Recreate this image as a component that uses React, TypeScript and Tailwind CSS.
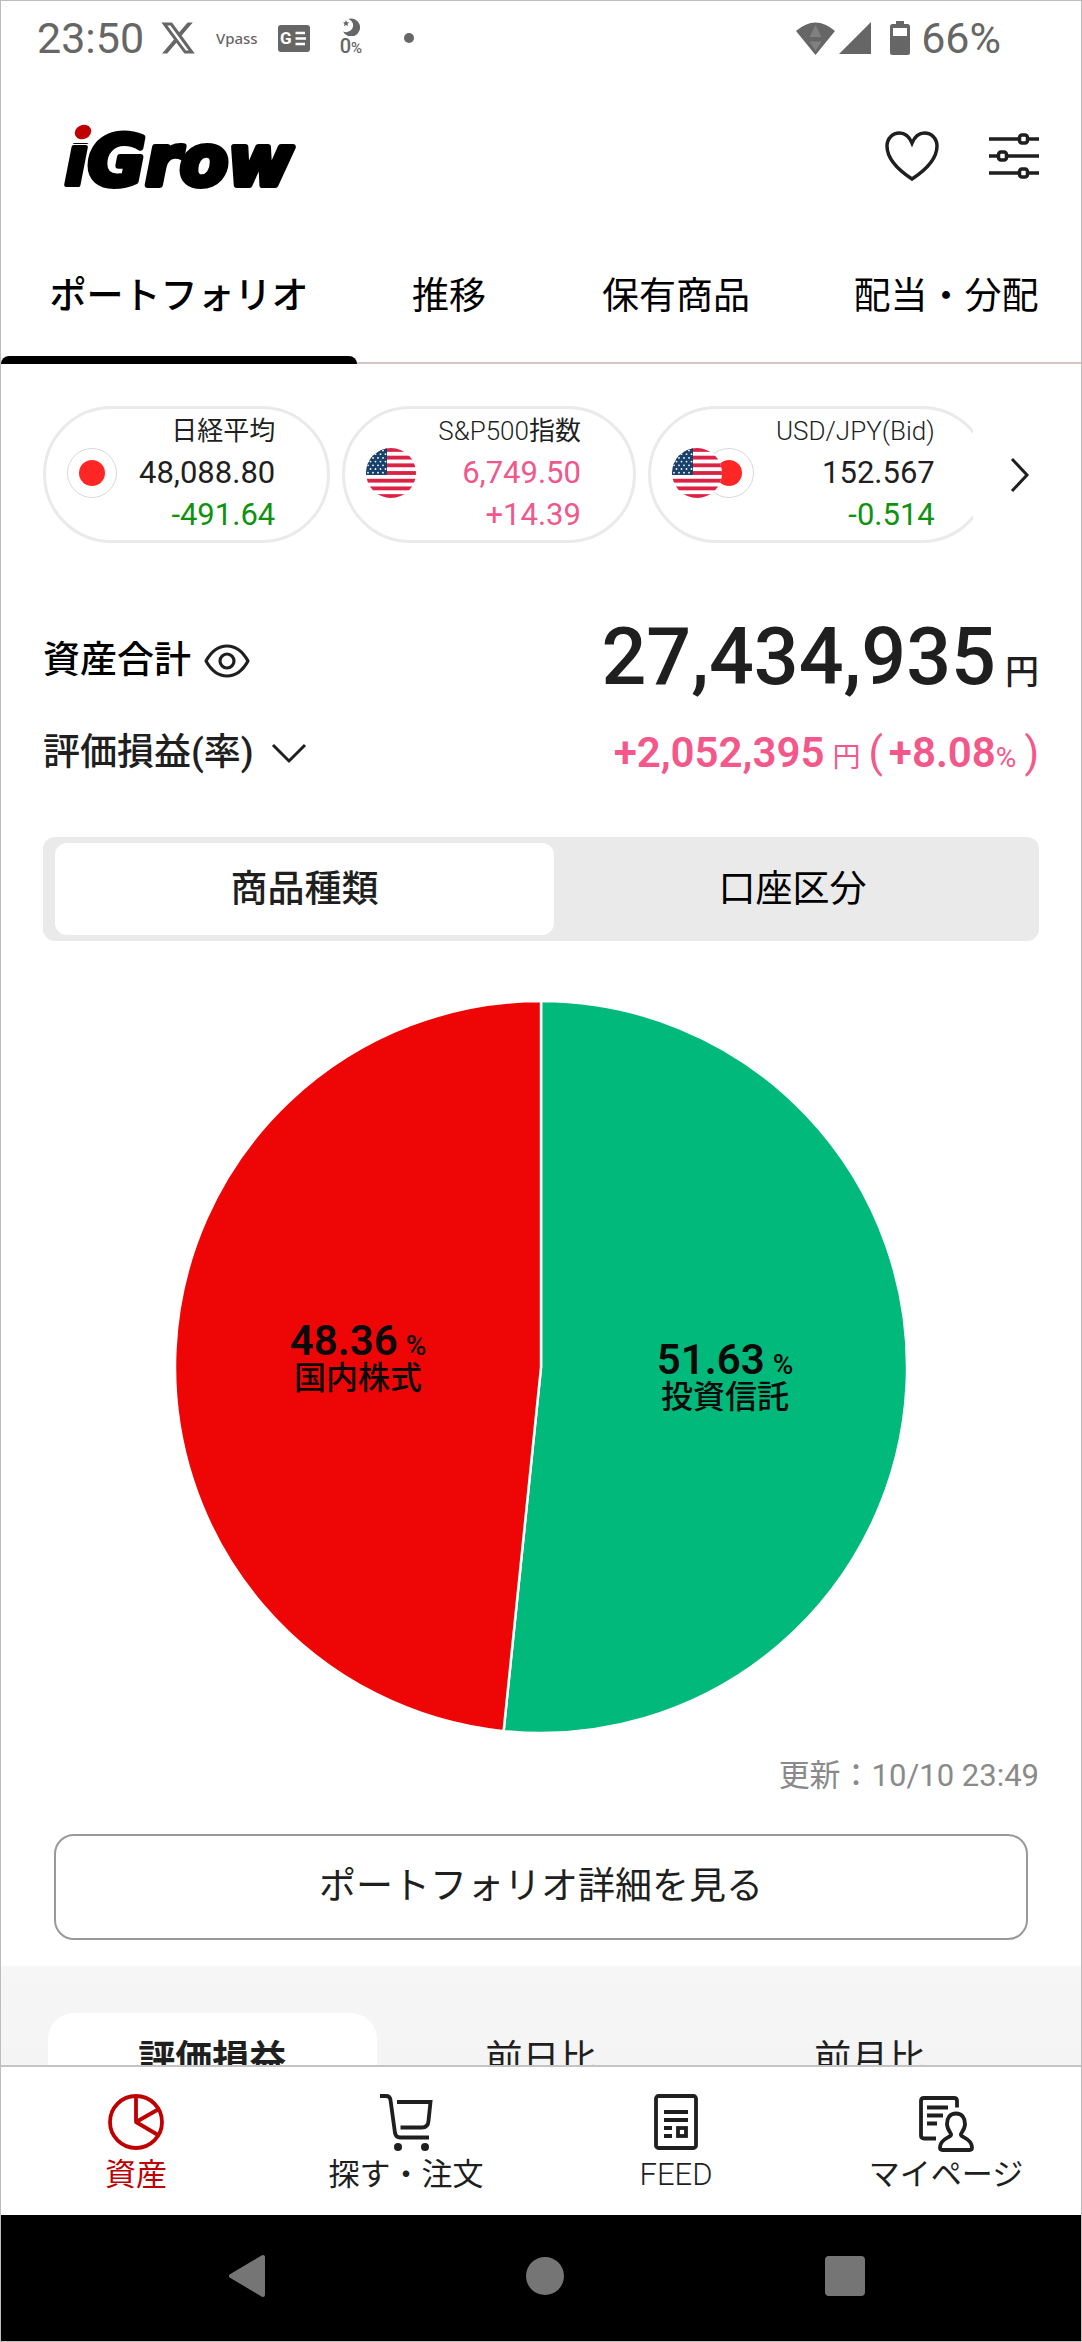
import { useState } from "react";
import type { ReactNode } from "react";

const tabs = ["ポートフォリオ", "推移", "保有商品", "配当・分配"];

const segments = ["商品種類", "口座区分"];

const periods = ["評価損益", "前日比", "前月比"];

const slices = [
  { name: "投資信託", pct: 51.63, color: "#02b97c", x: 550, y: 373 },
  { name: "国内株式", pct: 48.36, color: "#ee0606", x: 183, y: 354 },
];

type Ticker = { id: string; name: ReactNode; price: string; diff: string; flags: ReactNode; priceClass: string; diffClass: string };

function JapanFlag({ className = "" }: { className?: string }) {
  return (
    <svg viewBox="0 0 50 50" className={`size-[50px] shrink-0 ${className}`} aria-hidden="true">
      <circle cx="25" cy="25" r="24.5" fill="#fff" stroke="#d5d9d9" />
      <circle cx="25" cy="25" r="13" fill="#ff2626" />
    </svg>
  );
}

function UsFlag({ id, className = "" }: { id: string; className?: string }) {
  const stripes = [0, 1, 2, 3, 4, 5, 6];
  const starRows = [0, 1, 2, 3, 4, 5, 6];
  const h = 50 / 13;
  return (
    <svg viewBox="0 0 50 50" className={`size-[50px] shrink-0 ${className}`} aria-hidden="true">
      <defs>
        <clipPath id={id}>
          <circle cx="25" cy="25" r="25" />
        </clipPath>
      </defs>
      <g clipPath={`url(#${id})`}>
        <rect width="50" height="50" fill="#fff" />
        {stripes.map((i) => (
          <rect key={i} y={i * 2 * h} width="50" height={h} fill="#dc2245" />
        ))}
        <rect width="21" height={h * 7} fill="#17406d" />
        {starRows.map((r) =>
          [0, 1, 2, 3].map((c) => (
            <circle key={`${r}-${c}`} cx={c * 5 + (r % 2 ? 4.5 : 2)} cy={r * 3.7 + 2.5} r="0.9" fill="#fff" />
          ))
        )}
      </g>
    </svg>
  );
}

const tickers: Ticker[] = [
  {
    id: "nikkei",
    name: <span className="font-normal">日経平均</span>,
    price: "48,088.80",
    diff: "-491.64",
    flags: <JapanFlag />,
    priceClass: "text-[#1f1f1f]",
    diffClass: "text-[#0f930f]",
  },
  {
    id: "sp500",
    name: (
      <>
        S&amp;P500<span className="font-normal">指数</span>
      </>
    ),
    price: "6,749.50",
    diff: "+14.39",
    flags: <UsFlag id="flag-sp" />,
    priceClass: "text-[#f0588c]",
    diffClass: "text-[#f0588c]",
  },
  {
    id: "usdjpy",
    name: "USD/JPY(Bid)",
    price: "152.567",
    diff: "-0.514",
    flags: (
      <>
        <UsFlag id="flag-usd" className="z-10" />
        <JapanFlag className="-ml-[18px]" />
      </>
    ),
    priceClass: "text-[#1f1f1f]",
    diffClass: "text-[#0f930f]",
  },
];

function StatusBar() {
  return (
    <div className="flex h-[74px] shrink-0 items-center justify-between pr-[80px] pl-[36px] text-[#666]">
      <div className="flex items-center">
        <span className="text-[43px] leading-[50px]">23:50</span>
        <svg viewBox="1 2 22 20" preserveAspectRatio="none" className="ml-[17px] h-8 w-[34px]" fill="currentColor" aria-hidden="true">
          <path d="M18.244 2.25h3.308l-7.227 8.26 8.502 11.24H16.17l-5.214-6.817L4.99 21.75H1.68l7.73-8.835L1.254 2.25H8.08l4.713 6.231zm-1.161 17.52h1.833L7.084 4.126H5.117z" />
        </svg>
        <span className="ml-[21px] font-['Noto_Sans',sans-serif] text-[15px] leading-5 font-medium">Vpass</span>
        <svg viewBox="0 0 32 27" className="ml-[20px] h-[27px] w-8" aria-hidden="true">
          <rect width="32" height="27" rx="3" fill="#666" />
          <text x="2" y="19" fontSize="17" fontWeight="700" fill="#fff">
            G
          </text>
          <path d="M17.5 8H27M17.5 13.5H28M17.5 19H27" stroke="#fff" strokeWidth="2.4" />
        </svg>
        <div className="ml-[30px] flex flex-col items-center">
          <svg viewBox="0 0 18 18" className="size-[18px]" fill="currentColor" aria-hidden="true">
            <path d="M6 1A9 9 0 1 1 1 13.5A7.5 7.5 0 0 0 10 11A6.5 6.5 0 0 0 6 1Z" />
            <path d="M4 2L5 4.2L7.2 4.5L5.5 6L6 8.200L4 7L2 8.2L2.5 6L1 4.5L3.2 4.2Z" />
          </svg>
          <span className="text-[20px] leading-5 font-medium">
            0<span className="text-[15px]">%</span>
          </span>
        </div>
        <span className="ml-[42px] size-[10px] rounded-full bg-[#666]" />
      </div>
      <div className="flex items-center">
        <svg viewBox="0 0 39 33" className="h-[33px] w-[39px]" aria-hidden="true">
          <path d="M0 9Q19.5 -8 39 9L19.5 33Z" fill="#666" />
          <path d="M19.5 3L25.5 15H13.5ZM13.5 19.5H25.5L19.5 29Z" fill="#808080" />
        </svg>
        <svg viewBox="0 0 32 32" className="ml-1 size-8" fill="currentColor" aria-hidden="true">
          <path d="M32 0V32H0Z" />
        </svg>
        <svg viewBox="0 0 20 34" className="ml-[19px] h-[34px] w-5" aria-hidden="true">
          <path d="M6 0H14V3H17.5Q20 3 20 5.5V31.5Q20 34 17.5 34H2.5Q0 34 0 31.5V5.5Q0 3 2.5 3H6Z" fill="#666" />
          <rect x="3" y="7" width="14" height="8" fill="#fff" />
        </svg>
        <span className="ml-[11px] text-[43px] leading-[50px]">66%</span>
      </div>
    </div>
  );
}

function Logo() {
  return (
    <svg viewBox="0 0 260 92" className="h-[92px] w-[260px]" role="img" aria-label="iGrow">
      <defs>
        {/* hides the font's own dot so the red one can take its place */}
        <linearGradient id="logo-stem" gradientUnits="userSpaceOnUse" x1="0" y1="0" x2="0" y2="100">
          <stop offset="33%" stopColor="#000" stopOpacity="0" />
          <stop offset="33%" stopColor="#000" />
        </linearGradient>
      </defs>
      <text
        x="3"
        y="75"
        fontSize="70"
        fontWeight="700"
        fontStyle="italic"
        stroke="#000"
        strokeWidth="6"
        strokeLinejoin="round"
        className="font-['DejaVu_Sans',sans-serif]"
      >
        <tspan fill="url(#logo-stem)" stroke="url(#logo-stem)" strokeWidth="4">
          i
        </tspan>
        Grow
      </text>
      <ellipse cx="22" cy="22" rx="8.5" ry="7" fill="#bf0000" transform="rotate(-25 22 22)" />
    </svg>
  );
}

function Header() {
  return (
    <header className="flex h-[162px] shrink-0 items-center justify-between pr-[42px] pl-[60px]">
      <a href="#top">
        <Logo />
      </a>
      <div className="flex items-center gap-[50px]">
        <button type="button" aria-label="お気に入り">
          <svg viewBox="0 0 54 50" className="h-[50px] w-[54px]" fill="none" stroke="#1f1f1f" strokeWidth="3.5" aria-hidden="true">
            <path d="M27 12C24 5 19.5 2 14.5 2C7.5 2 2 7.5 2 15C2 26 11 37.5 27 48C43 37.5 52 26 52 15C52 7.5 46.5 2 39.5 2C34.5 2 30 5 27 12Z" />
          </svg>
        </button>
        <button type="button" aria-label="設定">
          <svg viewBox="0 0 50 48" className="h-12 w-[50px]" fill="none" stroke="#1f1f1f" strokeWidth="3.5" aria-hidden="true">
            <path d="M0 7H30M39 7H50M0 24H9M18 24H50M0 41H30M39 41H50" />
            <rect x="30.5" y="3" width="8" height="8" rx="2.5" />
            <rect x="9.5" y="20" width="8" height="8" rx="2.5" />
            <rect x="30.5" y="37" width="8" height="8" rx="2.5" />
          </svg>
        </button>
      </div>
    </header>
  );
}

function TickerPill({ name, price, diff, flags, priceClass, diffClass }: Ticker) {
  return (
    <div className="flex shrink-0 items-center gap-[22px] rounded-full border-[3px] border-[#eaeaea] pt-px pr-[52px] pb-1 pl-[21px]">
      <div className="flex">{flags}</div>
      <div className="text-right text-[31px] leading-[42px]">
        <p className="text-[26px] leading-[42px] font-light text-[#1f1f1f]">{name}</p>
        <p className={priceClass}>{price}</p>
        <p className={diffClass}>{diff}</p>
      </div>
    </div>
  );
}

function AllocationPie() {
  const r = 366;
  let total = 0;

  const paths = slices.map((s, i) => {
    const start = (total / 100) * 2 * Math.PI;
    total = i === slices.length - 1 ? 100 : total + s.pct;
    const end = (total / 100) * 2 * Math.PI;
    const x1 = r + r * Math.sin(start);
    const y1 = r - r * Math.cos(start);
    const x2 = r + r * Math.sin(end);
    const y2 = r - r * Math.cos(end);
    return `M ${r} ${r} L ${x1} ${y1} A ${r} ${r} 0 ${end - start > Math.PI ? 1 : 0} 1 ${x2} ${y2} Z`;
  });

  return (
    <svg viewBox="0 0 732 732" className="mx-auto block w-[73.5%]" role="img" aria-label="商品種類の内訳">
      {paths.map((d, i) => (
        <path key={slices[i].name} d={d} fill={slices[i].color} stroke="#fff" strokeWidth="2.5" />
      ))}
      {slices.map((s) => (
        <g key={s.name} textAnchor="middle" fill="#0a0a0a">
          <text x={s.x} y={s.y} fontSize="42" fontWeight="600">
            {s.pct}
            <tspan dx="8" fontSize="28" fontWeight="500">
              %
            </tspan>
          </text>
          <text x={s.x} y={s.y + 34} fontSize="32" fontWeight="500">
            {s.name}
          </text>
        </g>
      ))}
    </svg>
  );
}

const navItems = [
  {
    label: "資産",
    icon: (
      <>
        <circle cx="28" cy="29" r="26" />
        <path d="M28 3V29L50 16.5M28 29L50 42" strokeLinejoin="round" />
      </>
    ),
  },
  {
    label: "探す・注文",
    icon: (
      <>
        <path d="M2 3H8Q12 3 12.5 7L17 40Q18 44.5 22 44.5H51M19 9H52.5L50.5 28Q50 34.5 44 34.5H22.5" />
        <circle cx="20" cy="54" r="4" fill="currentColor" stroke="none" />
        <circle cx="47" cy="54" r="4" fill="currentColor" stroke="none" />
      </>
    ),
  },
  {
    label: "FEED",
    icon: (
      <>
        <rect x="8" y="3" width="40" height="52" rx="2.5" />
        <path d="M16 19H40M16 27H40M16 35H24M16 43H24" />
        <rect x="30" y="35" width="8" height="8" />
      </>
    ),
  },
  {
    label: "マイページ",
    icon: (
      <>
        <path d="M18 45.5H6Q3 45.5 3 42.5V8Q3 5 6 5H36Q39 5 39 8V14.5" />
        <path d="M9 14.5H30M9 22.5H25M9 30.5H19" />
        <path d="M38 20.5C32 20.5 29 25 29 31C29 35 30.5 37 32.5 40C36 45 22 44 22 54.5Q22 57 24.5 57H51.5Q54 57 54 54.5C54 44 40 45 43.5 40C45.5 37 47 35 47 31C47 25 44 20.5 38 20.5Z" />
      </>
    ),
  },
];

export default function App() {
  const [tab, setTab] = useState(0);
  const [segment, setSegment] = useState(0);
  const [period, setPeriod] = useState(0);
  const [nav, setNav] = useState(0);

  return (
    <div className="flex h-screen flex-col overflow-hidden border border-[#bdbdbd] bg-white font-['Roboto','Noto_Sans_CJK_JP',sans-serif] text-[#1f1f1f]">
      <StatusBar />
      <Header />

      <div role="tablist" className="grid shrink-0 grid-cols-[356fr_184fr_270fr_270fr] border-b-2 border-[#d5c6c4] text-[37px] leading-[54px] text-black">
        {tabs.map((t, i) => (
          <button
            key={t}
            type="button"
            role="tab"
            aria-selected={tab === i}
            onClick={() => setTab(i)}
            className={`relative pt-[33px] pb-[38px] whitespace-nowrap ${tab === i ? "font-medium" : ""}`}
          >
            {t}
            {tab === i && <span className="absolute inset-x-0 -bottom-[2px] h-2 rounded-t-lg bg-black" />}
          </button>
        ))}
      </div>

      <main className="min-h-0 flex-1 overflow-y-auto [scrollbar-width:none]">
        <div className="flex items-center pt-[42px] pl-[42px]">
          <div className="flex min-w-0 flex-1 gap-3 overflow-hidden">
            {tickers.map((t) => (
              <TickerPill key={t.id} {...t} />
            ))}
          </div>
          <button type="button" aria-label="次へ" className="flex w-[108px] justify-center pr-[14px]">
            <svg viewBox="0 0 20 36" className="h-9 w-5" fill="none" stroke="#1f1f1f" strokeWidth="3" aria-hidden="true">
              <path d="M2 2L17 18L2 34" />
            </svg>
          </button>
        </div>

        <section className="px-[42px] pt-[74px]">
          <div className="flex items-center justify-between">
            <div className="flex items-center gap-[13px] pt-2">
              <h2 className="text-[37px] leading-[54px] font-medium text-black">資産合計</h2>
              <button type="button" aria-label="金額を隠す">
                <svg viewBox="0 0 46 34" className="h-[34px] w-[46px]" fill="none" stroke="#1f1f1f" strokeWidth="3.2" aria-hidden="true">
                  <path d="M2 17C7 8 14 2 23 2C32 2 39 8 44 17C39 26 32 32 23 32C14 32 7 26 2 17Z" strokeLinejoin="round" />
                  <circle cx="23" cy="17" r="7" />
                </svg>
              </button>
            </div>
            <p className="text-[79px] leading-[80px] font-medium">
              27,434,935<span className="ml-[9px] text-[34px] leading-none">円</span>
            </p>
          </div>
          <div className="mt-[29px] flex items-center justify-between">
            <button type="button" className="flex items-center gap-[17px] text-[37px] leading-[54px] font-medium">
              評価損益(率)
              <svg viewBox="0 0 36 22" className="h-[22px] w-9" fill="none" stroke="#1f1f1f" strokeWidth="3" aria-hidden="true">
                <path d="M2 3L18 19L34 3" />
              </svg>
            </button>
            <p className="flex items-baseline text-[42px] leading-[54px] font-semibold text-[#f4578a]">
              +2,052,395
              <span className="ml-[8px] text-[28px] leading-none font-normal">円</span>
              <span className="ml-[8px] font-normal">(</span>
              <span className="ml-[6px]">+8.08</span>
              <span className="text-[28px] leading-none font-normal">%</span>
              <span className="ml-[8px] font-normal">)</span>
            </p>
          </div>

          <div role="tablist" className="mt-[57px] grid grid-cols-[498fr_476fr] rounded-xl bg-[#eaeaea] py-[6px] pr-2 pl-3 text-[37px] leading-[54px]">
            {segments.map((s, i) => (
              <button
                key={s}
                type="button"
                role="tab"
                aria-selected={segment === i}
                onClick={() => setSegment(i)}
                className={`rounded-xl pt-5 pb-[18px] ${segment === i ? "bg-white font-medium" : "text-black"}`}
              >
                {s}
              </button>
            ))}
          </div>

          <div className="pt-[60px]">
            <AllocationPie />
          </div>
          <p className="mt-[20px] text-right text-[31px] leading-[46px] text-[#8a8a8a]">更新：10/10 23:49</p>
        </section>

        <div className="px-[53px] pt-[35px] pb-[26px]">
          <button type="button" className="w-full rounded-[20px] border-[2px] border-[#999] py-[24px] text-[37px] leading-[54px]">
            ポートフォリオ詳細を見る
          </button>
        </div>

        <section className="bg-gradient-to-b from-[#f6f6f6] to-[#f3f3f3] px-[47px] pt-[47px] pb-[60px]">
          <div role="tablist" className="grid grid-cols-3 text-[37px] leading-[54px]">
            {periods.map((p, i) => (
              <button
                key={p}
                type="button"
                role="tab"
                aria-selected={period === i}
                onClick={() => setPeriod(i)}
                className={`rounded-[26px] py-5 ${period === i ? "bg-white font-bold" : ""}`}
              >
                {p}
              </button>
            ))}
          </div>
        </section>
      </main>

      <nav className="grid shrink-0 grid-cols-4 border-t-2 border-[#c4c4c4] bg-white pt-[26px] pb-[18px]">
        {navItems.map((item, i) => (
          <a
            key={item.label}
            href="#top"
            onClick={() => setNav(i)}
            className={`flex flex-col items-center text-[31px] leading-[44px] ${
              nav === i ? "text-[#bf0000]" : "text-[#1f1f1f]"
            } ${item.label === "FEED" ? "font-light" : ""}`}
          >
            <svg viewBox="0 0 56 60" className="h-[60px] w-[56px]" fill="none" stroke="currentColor" strokeWidth="3.8" aria-hidden="true">
              {item.icon}
            </svg>
            {item.label}
          </a>
        ))}
      </nav>

      <div className="flex shrink-0 items-center justify-between bg-black pt-[38px] pr-[20%] pb-[42px] pl-[21%]">
        <button type="button" aria-label="戻る">
          <svg viewBox="0 0 38 46" className="h-[46px] w-[38px]" aria-hidden="true">
            <path d="M3 23L35 4V42Z" fill="#757575" stroke="#757575" strokeWidth="4" strokeLinejoin="round" />
          </svg>
        </button>
        <button type="button" aria-label="ホーム" className="size-[38px] rounded-full bg-[#757575]" />
        <button type="button" aria-label="履歴" className="size-10 rounded-[4px] bg-[#757575]" />
      </div>
    </div>
  );
}
